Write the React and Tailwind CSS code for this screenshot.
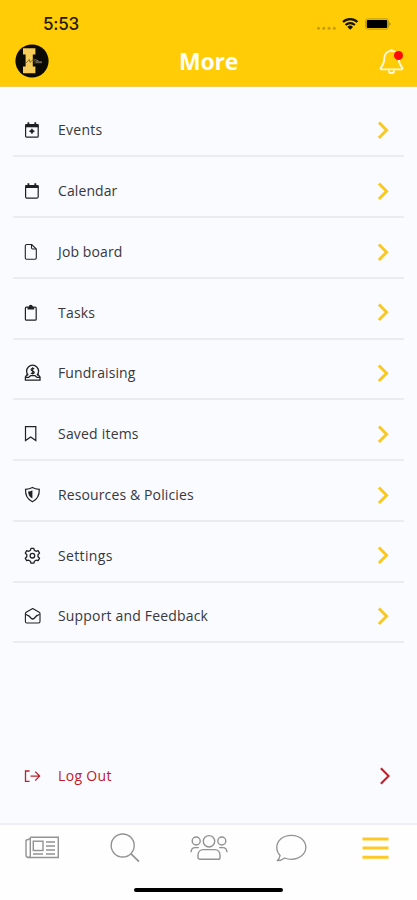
import React from 'react';

const EventsIcon = () => (
  <svg className="w-4 h-4.5" viewBox="0 0 16 18" fill="none" stroke="currentColor">
    <rect x="1.6" y="3.6" width="12.6" height="12.6" rx="1" strokeWidth="1.2" />
    <path d="M1.2 4.8h13.4" strokeWidth="3" />
    <path d="M4.4 1.2v3M11.3 1.2v3" strokeWidth="1.8" />
    <path d="M7.9 7.8v5M5.4 10.3h5" strokeWidth="1.4" />
    <circle cx="7.9" cy="10.3" r="1.8" fill="currentColor" stroke="none" />
  </svg>
);

const CalendarIcon = () => (
  <svg className="w-4 h-4.5" viewBox="0 0 16 18" fill="none" stroke="currentColor">
    <rect x="1.6" y="3.6" width="12.6" height="12.6" rx="1.5" strokeWidth="1.2" />
    <path d="M1.2 4.6h13.4" strokeWidth="2.8" />
    <path d="M4.4 1.2v3M11.3 1.2v3" strokeWidth="1.8" />
  </svg>
);

const FileIcon = () => (
  <svg className="w-4 h-4.5" viewBox="0 0 16 18" fill="none" stroke="currentColor" strokeWidth="1.1">
    <path d="M7.7 1.5H2.8A1.5 1.5 0 0 0 1.3 3v12a1.2 1.2 0 0 0 1.2 1.2h8.6a1.2 1.2 0 0 0 1.2-1.2V6z" />
    <path d="M7.5 1.8v3a1.2 1.2 0 0 0 1.2 1.2h3.4" />
  </svg>
);

const ClipboardIcon = () => (
  <svg className="w-4 h-4.5" viewBox="0 0 16 18" fill="none" stroke="currentColor" strokeWidth="1.2">
    <rect x="1.4" y="3.2" width="10.8" height="13" rx="1" />
    <path d="M3.5 5.5V3.2h1.6a1.8 1.8 0 0 1 3.5 0h1.6v2.3z" fill="currentColor" stroke="none" />
    <circle cx="6.8" cy="2.6" r="1.3" />
  </svg>
);

const FundraisingIcon = () => (
  <svg className="w-4.5 h-4.5" viewBox="0 0 18 18" fill="none" stroke="currentColor" strokeWidth="1.3">
    <path d="M4.2 11.300A6 6 0 1 1 13 11.300" />
    <path d="M10.200 4.800C9.400 3.900 7.100 4.100 7.100 5.700c0 1.500 3.100 1 3.100 2.700 0 1.400-2.300 1.600-3.300.6M8.700 3.200v7.400" strokeWidth="1.200" />
    <path d="M4 10.800H2.800L1.400 13v3.200h14.600V13l-1.600-2.200h-1.200M1.600 13.400h3l2-1.700h4.400l2 1.700h3" />
  </svg>
);

const BookmarkIcon = () => (
  <svg className="w-4 h-4.5" viewBox="0 0 16 18" fill="none" stroke="currentColor" strokeWidth="1.2">
    <path d="M1.500 1.600h10.300v14L6.700 11.900l-5.200 3.700z" />
  </svg>
);

const ShieldIcon = () => (
  <svg className="w-4.5 h-4.5" viewBox="0 0 18 18" fill="none" stroke="currentColor" strokeWidth="1.2">
    <path d="M8.4 1.500C6.600 2.600 4.200 3.200 1.500 3.300c-.2 5.500 1.700 10 6.900 12.500 5.200-2.500 7.100-7 6.900-12.500-2.700-.1-5.100-.7-6.900-1.800z" />
    <path d="M8.400 4.200C7.200 5 5.800 5.400 4.100 5.500c.1 3.300 1.400 5.500 4.300 7.100z" fill="currentColor" stroke="none" />
  </svg>
);

const SettingsIcon = () => (
  <svg className="w-4.5 h-4.5" viewBox="0 0 18 18" fill="none" stroke="currentColor" strokeWidth="1.3" strokeLinejoin="round">
    <path d="M6.4 3.4 7 1.4h2.8l.6 2 1.700.9 2-.6 1.400 2.400L14 7.700v2l1.500 1.600-1.400 2.400-2-.5-1.700 1-.6 2H7l-.6-2-1.700-1-2 .5-1.400-2.400 1.500-1.600v-2L1.300 6.100l1.400-2.400 2 .6z" />
    <circle cx="8.400" cy="8.700" r="2.300" />
  </svg>
);

const EnvelopeIcon = () => (
  <svg className="w-4.5 h-4.5" viewBox="0 0 18 18" fill="none" stroke="currentColor" strokeWidth="1.1" strokeLinejoin="round">
    <path d="M1.400 6.600c0-.6.3-1 .8-1.300L8.700 1.600l6.500 3.700c.5.3.8.7.8 1.300v8a1.400 1.400 0 0 1-1.400 1.400H2.800a1.400 1.400 0 0 1-1.400-1.400z" />
    <path d="m4.200 8.200 3 3.100c1 .9 2 .9 3 0l3-3.100" strokeWidth="1.300" />
    <path d="m1.800 7.200 2.400 1.500M15.500 7.200l-2.400 1.500" />
  </svg>
);

const LogoutIcon = () => (
  <svg className="w-4.5 h-4" viewBox="0 0 18 16" fill="none" stroke="currentColor" strokeWidth="1.3">
    <path d="M5.600 3H1.500v10.300h4.100M6.500 8.100h9M11.200 3.600l4.400 4.500-4.400 4.500" />
  </svg>
);

const Chevron = ({ className, strokeWidth }) => (
  <svg className={className} viewBox="0 0 14 20" fill="none" stroke="currentColor" strokeWidth={strokeWidth}>
    <path d="m2 1.600 8.300 8.400L2 18.400" />
  </svg>
);

const menuItems = [
  { name: 'Events', icon: EventsIcon, tracking: 'tracking-[0.25px]' },
  { name: 'Calendar', icon: CalendarIcon, tracking: 'tracking-[0.1px]' },
  { name: 'Job board', icon: FileIcon, tracking: 'tracking-[0.12px]' },
  { name: 'Tasks', icon: ClipboardIcon, tracking: 'tracking-[0.2px]' },
  { name: 'Fundraising', icon: FundraisingIcon, tracking: 'tracking-[0.1px]' },
  { name: 'Saved items', icon: BookmarkIcon, tracking: 'tracking-[0.2px]' },
  { name: 'Resources & Policies', icon: ShieldIcon, tracking: 'tracking-[0.12px]' },
  { name: 'Settings', icon: SettingsIcon, tracking: 'tracking-[0.35px]' },
  { name: 'Support and Feedback', icon: EnvelopeIcon, tracking: 'tracking-[0.17px]' },
];

const StatusBar = () => (
  <div className="flex items-center justify-between h-12 pl-[43px] pr-[26px]">
    <span className="font-['Inter',sans-serif] text-[17px] font-medium leading-none tracking-[-0.2px] text-[#211b00]">5:53</span>
    <svg className="w-[76px] h-4" viewBox="0 0 76 16">
      <g fill="#c49d08">
        <circle cx="3.5" cy="12.3" r="1.5" />
        <circle cx="8.8" cy="12.3" r="1.5" />
        <circle cx="14" cy="12.3" r="1.5" />
        <circle cx="19.3" cy="12.3" r="1.5" />
      </g>
      <g fill="none" stroke="#161200" strokeWidth="2.2">
        <path d="M28 6a10.5 10.5 0 0 1 14.4 0" />
        <path d="M30.6 9a6.6 6.6 0 0 1 9.2 0" />
      </g>
      <path d="M32.4 10.9a4 4 0 0 1 5.6 0l-2.8 2.9z" fill="#161200" />
      <rect x="50.7" y="2.900" width="22.600" height="10.200" rx="2" fill="none" stroke="#b8950c" strokeWidth="1" />
      <rect x="51.800" y="4" width="20.400" height="8" rx="1" fill="#000" />
      <path d="M74.3 6.200c1.800.6 1.800 3 0 3.600z" fill="#a98a0a" />
    </svg>
  </div>
);

const Header = () => (
  <header className="h-[87px] shrink-0 bg-[#ffcc05] border-b border-[#f0cc50]">
    <StatusBar />
    <div className="flex items-center justify-between h-[26px] pl-[15px] pr-[13px]">
      <svg className="w-[34px] h-[34px]" viewBox="0 0 34 34">
        <circle cx="17" cy="17" r="16.6" fill="#0b0a05" />
        <path d="M8 4.2h12.4v6.4h-2.6v12h2.6v6.6H8v-6.6h2.6v-12H8z" fill="#f5cc58" />
        <path d="m11 19 3.4-3.6.6 3 4-3.6 1.6 3M17.5 16.5l4 1M19 19l8-.3" fill="none" stroke="#6b5a2c" strokeWidth="0.8" />
        <path d="m20.5 15.5 3 1.6M21 18h6" fill="none" stroke="#aaa6a0" strokeWidth="0.8" />
      </svg>
      <h1 className="pr-[11px] font-['Open_Sans',sans-serif] text-[23px] leading-none font-bold tracking-[-0.2px] text-[#fffdf4]">More</h1>
      <div className="relative">
        <svg className="w-[25px] h-[27px]" viewBox="0 0 25 27" fill="none" stroke="#fff8dc" strokeWidth="1.9" strokeLinejoin="round">
          <path d="M12.5 2.9c-4.6 0-7.2 3.2-7.2 7.4 0 5.3-1.6 7-3.400 9.200-.6.9-.2 1.900.9 1.900h19.400c1.100 0 1.500-1 .9-1.900-1.800-2.200-3.400-3.900-3.400-9.200 0-4.200-2.600-7.400-7.200-7.400z" />
          <path d="M12.500 1v2M9.800 22.400a2.700 2.700 0 0 0 5.400 0" />
        </svg>
        <span className="absolute top-[3px] right-[1px] w-[9px] h-[9px] rounded-full bg-[#ff0808]" />
      </div>
    </div>
  </header>
);

const TabBar = () => (
  <nav className="h-[77px] shrink-0 flex flex-col bg-[#fefefe] border-t-2 border-[#eeeff3]">
    <div className="flex items-center h-[45px] pl-[25px] text-[#929292]">
      <svg className="w-[35px] h-[23px]" viewBox="0 0 35 23" fill="none" stroke="currentColor" strokeWidth="1.4">
        <path d="M5.300 1.200h28v20.300H3.600A2.600 2.600 0 0 1 1 19V4.300L5.300 2.600" />
        <path d="M5.300 1.200V19.500a1.900 1.900 0 0 1-2 2" />
        <rect x="8.300" y="5.200" width="9.700" height="9.300" />
        <path d="M21 6h9M21 10h9M21 14h9M8 18h10M21 18h9" />
      </svg>
      <svg className="w-[31px] h-[30px] ml-[50px]" viewBox="0 0 31 30" fill="none" stroke="currentColor" strokeWidth="1.4">
        <circle cx="12.700" cy="12.500" r="11.500" />
        <path d="m20.800 20.700 8.200 8" strokeWidth="1.700" />
      </svg>
      <svg className="w-[38px] h-[27px] ml-[49px]" viewBox="0 0 38 27" fill="none" stroke="currentColor" strokeWidth="1.400">
        <circle cx="19" cy="7.300" r="5.700" />
        <circle cx="6.200" cy="7" r="4" />
        <circle cx="31.800" cy="7" r="4" />
        <path d="M13.300 15.600h11.400c3.300 0 5.300 2.400 5.300 5.400v2.400c0 1.200-.8 1.900-1.900 1.900H9.900c-1.100 0-1.900-.7-1.900-1.900V21c0-3 2-5.400 5.300-5.400z" />
        <path d="M1 18.300c.2-3 1.900-4.700 4.200-4.700h3.600M37 18.300c-.2-3-1.900-4.700-4.200-4.700h-3.600" />
      </svg>
      <svg className="w-8 h-7 ml-[47px]" viewBox="0 0 32 28" fill="none" stroke="currentColor" strokeWidth="1.300" strokeLinejoin="round">
        <path d="M16.300 1.300c8.200 0 14.500 5.200 14.500 12s-6.300 12-14.500 12c-2.500 0-4.700-.5-6.700-1.300-2.200 1.800-4.600 2.800-7.400 2.700 1.700-1.500 2.600-3 2.900-5.200C3 19.400 1.800 16.500 1.800 13.300c0-6.800 6.300-12 14.500-12z" />
      </svg>
      <svg className="w-[27px] h-6 ml-[55px]" viewBox="0 0 27 24" stroke="#ffc925" strokeWidth="3">
        <path d="M.5 3h26M.5 12.100h26M.5 21.200h26" />
      </svg>
    </div>
    <div className="w-[149px] h-[4.500px] mt-[17.500px] mx-auto rounded-full bg-black" />
  </nav>
);

const App = () => {
  return (
    <div className="w-full h-[900px] flex flex-col overflow-hidden bg-[#f9fbff] font-['Open_Sans',sans-serif]">
      <Header />

      <main className="flex-1 px-[13px] pt-[9.500px]">
        <ul>
          {menuItems.map((item) => (
            <li
              key={item.name}
              className="flex items-center h-[60.750px] pt-[9px] pl-[11px] pr-[14px] border-b-2 border-[#ebecf1] text-[#38383c]"
            >
              <div className="w-[34px] shrink-0 text-[#202022]">
                <item.icon />
              </div>
              <span className={`flex-1 whitespace-nowrap text-sm ${item.tracking}`}>{item.name}</span>
              <Chevron className="w-[13px] h-[18.500px] text-[#f9c823]" strokeWidth="3.200" />
            </li>
          ))}
        </ul>

        <button className="flex items-center w-full h-10 mt-[113px] pl-[11px] pr-3 text-left text-[#bd2029]">
          <span className="w-[34px] shrink-0">
            <LogoutIcon />
          </span>
          <span className="flex-1 text-sm tracking-[0.350px]">Log Out</span>
          <Chevron className="w-[13px] h-5" strokeWidth="2.200" />
        </button>
      </main>

      <TabBar />
    </div>
  );
};

export default App;
